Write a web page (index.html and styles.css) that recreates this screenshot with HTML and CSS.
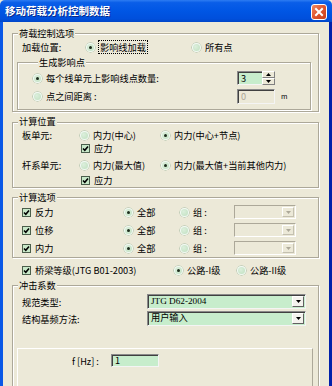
FILE: index.html
```html
<!DOCTYPE html>
<html lang="zh-CN">
<head>
<meta charset="utf-8">
<title>移动荷载分析控制数据</title>
<link rel="stylesheet" href="styles.css">
</head>
<body>
<div class="window">
  <div class="titlebar">
    <span class="title">移动荷载分析控制数据</span>
    <span class="close"><svg width="10" height="10" viewBox="0 0 10 10"><path d="M2 2 L8 8 M8 2 L2 8" stroke="#fff" stroke-width="2" stroke-linecap="square"/></svg></span>
  </div>
  <div class="body">
    <div class="group g1">
      <div class="gtitle">荷载控制选项</div>
      <div class="row row-load">
        <span>加载位置:</span>
        <span class="opt"><span class="radio on"></span><span class="focus">影响线加载</span></span>
        <span class="opt"><span class="radio"></span><span>所有点</span></span>
      </div>
      <div class="group sub">
        <div class="gtitle">生成影响点</div>
        <div class="row row-pt1">
          <span class="opt"><span class="radio on"></span><span>每个线单元上影响线点数量:</span></span>
          <span class="spin">
            <span class="field">3</span>
            <span class="spin-btns">
              <span class="sbtn"><svg width="5" height="3" viewBox="0 0 5 3"><path d="M0 3 L2.5 0 L5 3Z" fill="#000"/></svg></span>
              <span class="sbtn"><svg width="5" height="3" viewBox="0 0 5 3"><path d="M0 0 L5 0 L2.5 3Z" fill="#000"/></svg></span>
            </span>
          </span>
        </div>
        <div class="row row-pt2">
          <span class="opt"><span class="radio"></span><span>点之间距离 :</span></span>
          <span class="field disabled">0</span>
          <span class="unit">m</span>
        </div>
      </div>
    </div>

    <div class="group g2">
      <div class="gtitle">计算位置</div>
      <div class="row row-pos first">
        <span>板单元:</span>
        <span class="opt"><span class="radio"></span><span>内力(中心)</span></span>
        <span class="opt"><span class="radio on"></span><span>内力(中心+节点)</span></span>
      </div>
      <div class="row row-stress first">
        <span class="opt"><span class="check on"><svg width="7" height="7" viewBox="0 0 7 7"><path d="M1 3.5 L2.8 5.3 L6 1.5" stroke="#000" stroke-width="1.6" fill="none"/></svg></span><span>应力</span></span>
      </div>
      <div class="row row-pos">
        <span>杆系单元:</span>
        <span class="opt"><span class="radio"></span><span>内力(最大值)</span></span>
        <span class="opt"><span class="radio on"></span><span>内力(最大值+当前其他内力)</span></span>
      </div>
      <div class="row row-stress">
        <span class="opt"><span class="check on"><svg width="7" height="7" viewBox="0 0 7 7"><path d="M1 3.5 L2.8 5.3 L6 1.5" stroke="#000" stroke-width="1.6" fill="none"/></svg></span><span>应力</span></span>
      </div>
    </div>

    <div class="group g3">
      <div class="gtitle">计算选项</div>
      <div class="row row-opt">
        <span class="opt"><span class="check on"><svg width="7" height="7" viewBox="0 0 7 7"><path d="M1 3.5 L2.8 5.3 L6 1.5" stroke="#000" stroke-width="1.6" fill="none"/></svg></span><span>反力</span></span>
        <span class="opt"><span class="radio on"></span><span>全部</span></span>
        <span class="opt"><span class="radio"></span><span>组 :</span></span>
        <span class="combo disabled"><span class="ctext"></span><span class="cbtn"><svg width="5" height="3" viewBox="0 0 5 3"><path d="M0 0 L5 0 L2.5 3Z" fill="#aca899"/></svg></span></span>
      </div>
      <div class="row row-opt">
        <span class="opt"><span class="check on"><svg width="7" height="7" viewBox="0 0 7 7"><path d="M1 3.5 L2.8 5.3 L6 1.5" stroke="#000" stroke-width="1.6" fill="none"/></svg></span><span>位移</span></span>
        <span class="opt"><span class="radio on"></span><span>全部</span></span>
        <span class="opt"><span class="radio"></span><span>组 :</span></span>
        <span class="combo disabled"><span class="ctext"></span><span class="cbtn"><svg width="5" height="3" viewBox="0 0 5 3"><path d="M0 0 L5 0 L2.5 3Z" fill="#aca899"/></svg></span></span>
      </div>
      <div class="row row-opt">
        <span class="opt"><span class="check on"><svg width="7" height="7" viewBox="0 0 7 7"><path d="M1 3.5 L2.8 5.3 L6 1.5" stroke="#000" stroke-width="1.6" fill="none"/></svg></span><span>内力</span></span>
        <span class="opt"><span class="radio on"></span><span>全部</span></span>
        <span class="opt"><span class="radio"></span><span>组 :</span></span>
        <span class="combo disabled"><span class="ctext"></span><span class="cbtn"><svg width="5" height="3" viewBox="0 0 5 3"><path d="M0 0 L5 0 L2.5 3Z" fill="#aca899"/></svg></span></span>
      </div>
    </div>

    <div class="row row-grade">
      <span class="opt"><span class="check on"><svg width="7" height="7" viewBox="0 0 7 7"><path d="M1 3.5 L2.8 5.3 L6 1.5" stroke="#000" stroke-width="1.6" fill="none"/></svg></span><span>桥梁等级(JTG B01-2003)</span></span>
      <span class="opt"><span class="radio on"></span><span>公路-I级</span></span>
      <span class="opt"><span class="radio"></span><span>公路-II级</span></span>
    </div>

    <div class="group g4">
      <div class="gtitle">冲击系数</div>
      <div class="row row-imp first">
        <span>规范类型:</span>
        <span class="combo"><span class="ctext">JTG D62-2004</span><span class="cbtn"><svg width="5" height="3" viewBox="0 0 5 3"><path d="M0 0 L5 0 L2.5 3Z" fill="#000"/></svg></span></span>
      </div>
      <div class="row row-imp">
        <span>结构基频方法:</span>
        <span class="combo"><span class="ctext">用户输入</span><span class="cbtn"><svg width="5" height="3" viewBox="0 0 5 3"><path d="M0 0 L5 0 L2.5 3Z" fill="#000"/></svg></span></span>
      </div>
      <div class="panel">
        <div class="row row-f">
          <span>f [Hz] :</span>
          <span class="field small">1</span>
        </div>
      </div>
    </div>
  </div>
</div>
</body>
</html>
```

FILE: styles.css
```css
* { box-sizing: border-box; }
html, body { margin: 0; padding: 0; }
body {
  width: 332px;
  height: 386px;
  overflow: hidden;
  background: #ECE9D8;
  font-family: "Noto Sans CJK SC", "Noto Sans", sans-serif;
  font-size: 9.2px;
  line-height: 12px;
  color: #000;
}
.window { display: flex; flex-direction: column; height: 386px; }
.titlebar {
  flex: none;
  height: 22px;
  display: flex;
  align-items: center;
  justify-content: space-between;
  padding: 0 5px 0 5px;
  background: linear-gradient(#2d7cf2 0%, #0a5ee8 12%, #0056e4 50%, #004fdc 85%, #0046c8 100%);
  border-radius: 5px 5px 0 0;
}
.title {
  color: #fff;
  font-weight: bold;
  font-size: 10.5px;
  text-shadow: 1px 1px 0 #0a2a8a;
}
.close {
  width: 16px;
  height: 16px;
  margin-top: 1px;
  border: 1px solid #fff;
  border-radius: 3px;
  background: linear-gradient(135deg, #f08a64 0%, #e0552e 50%, #c8401c 100%);
  display: flex;
  align-items: center;
  justify-content: center;
}
.body {
  flex: 1;
  min-height: 0;
  overflow: hidden;
  border-left: 3px solid #0a58e6;
  border-right: 3px solid #0020aa;
  padding: 11px 10px 0 9px;
  display: flex;
  flex-direction: column;
}
.group {
  border: 1px solid #aca899;
  box-shadow: inset 1px 1px 0 #fff, 1px 1px 0 #fff;
  display: flex;
  flex-direction: column;
  flex: none;
}
.gtitle {
  align-self: flex-start;
  height: 10px;
  line-height: 10px;
  margin: -6px 0 -4px 5px;
  padding: 0 1px;
  background: #ECE9D8;
  position: relative;
}
.g2 > .gtitle { margin: -7px 0 -3px 5px; }
.row { display: grid; align-items: center; flex: none; white-space: nowrap; }
.opt { display: flex; align-items: center; gap: 4px; }

.radio {
  width: 9px; height: 9px;
  border-radius: 50%;
  background: radial-gradient(circle at 40% 40%, #dcefdc, #b9dcb9);
  box-shadow: 0 0 0 1px #f4f8f4 inset, 0 0 0 0.5px #a0b8a0;
  display: flex; align-items: center; justify-content: center;
  flex: none;
}
.radio.on::after {
  content: "";
  width: 3px; height: 3px;
  border-radius: 50%;
  background: #1d2e1d;
}
.check {
  width: 9px; height: 9px;
  border: 1px solid #4b5e4b;
  background: #c8e8c8;
  display: flex; align-items: center; justify-content: center;
  flex: none;
}
.focus { outline: 1px dotted #000; outline-offset: 0; padding: 0 1px; }

.field {
  height: 15px;
  background: #c7edcc;
  border: 1px solid;
  border-color: #8a8a8a #f4f4f4 #f4f4f4 #8a8a8a;
  box-shadow: inset 1px 1px 0 #404040;
  padding-left: 3px;
  line-height: 12px;
  display: block;
}
.field.disabled { background: #ECE9D8; color: #aca899; width: 38px; }
.field.small { height: 13px; line-height: 11px; }
.unit { font-size: 7px; padding-left: 6px; }

.spin { display: flex; width: 38px; height: 14px; }
.spin .field { flex: 1; height: 14px; border-right: none; }
.spin-btns { width: 13px; display: flex; flex-direction: column; }
.sbtn {
  flex: 1;
  background: #ECE9D8;
  border: 1px solid;
  border-color: #fff #808080 #808080 #fff;
  display: flex; align-items: center; justify-content: center;
}

.combo {
  display: flex;
  height: 15px;
  background: #c7edcc;
  border: 1px solid;
  border-color: #8a8a8a #f4f4f4 #f4f4f4 #8a8a8a;
  box-shadow: inset 1px 1px 0 #404040;
}
.combo .ctext { flex: 1; padding-left: 3px; line-height: 12px; font-family: "Liberation Serif", "Noto Sans CJK SC", serif; }
.cbtn {
  width: 12px;
  margin: 1px 1px 1px 0;
  background: #f4f3ee;
  border: 1px solid;
  border-color: #fff #606060 #606060 #fff;
  display: flex; align-items: center; justify-content: center;
}
.combo.disabled { background: #ECE9D8; height: 14px; border-color: #aca899 #fff #fff #aca899; box-shadow: none; }
.combo.disabled .cbtn { border-color: #fff #c4c0b0 #c4c0b0 #fff; background: #ECE9D8; }

/* group 1 */
.g1 { padding-bottom: 1px; }
.row-load { height: 16px; margin-top: 5px; padding-left: 9px; grid-template-columns: 64px 106px auto; }
.sub { margin: 7px 7px 0 4px; padding: 0 0 4px 15px; }
.row-pt1 { height: 16px; margin-top: 7px; grid-template-columns: 204px auto; }
.row-pt2 { height: 18px; margin-top: 1px; grid-template-columns: 204px 38px auto; }

/* group 2 */
.g2 { margin-top: 10px; }
.row-pos { height: 14px; padding-left: 9px; grid-template-columns: 58px 81px auto; margin-top: 3px; }
.row-pos.first { height: 12px; margin-top: 6px; }
.row-stress { height: 14px; margin-top: 1px; padding-left: 68px; grid-template-columns: auto; }
.row-stress.first { margin-top: 0; }

/* group 3 */
.g3 { margin-top: 9px; }
.row-opt { height: 18px; padding-left: 9px; grid-template-columns: 102px 56px 54px 62px; }
.row-opt:nth-child(2) { margin-top: 5px; }

/* grade */
.row-grade { height: 16px; margin-top: 4px; padding-left: 10px; grid-template-columns: 152px 63px auto; }

/* group 4 */
.g4 { margin-top: 7px; }
.row-imp { height: 17px; padding-left: 9px; grid-template-columns: 125px 159px; }
.row-imp.first { margin-top: 7px; }
.row-imp .combo { height: 15px; }
.panel {
  margin: 21px 5px 0 4px;
  height: 60px;
  border-top: 1px solid #fff;
  border-left: 1px solid #fff;
  border-right: 1px solid #aca899;
  padding: 5px 0 0 54px;
}
.row-f { height: 13px; grid-template-columns: 39px 48px; }
```
